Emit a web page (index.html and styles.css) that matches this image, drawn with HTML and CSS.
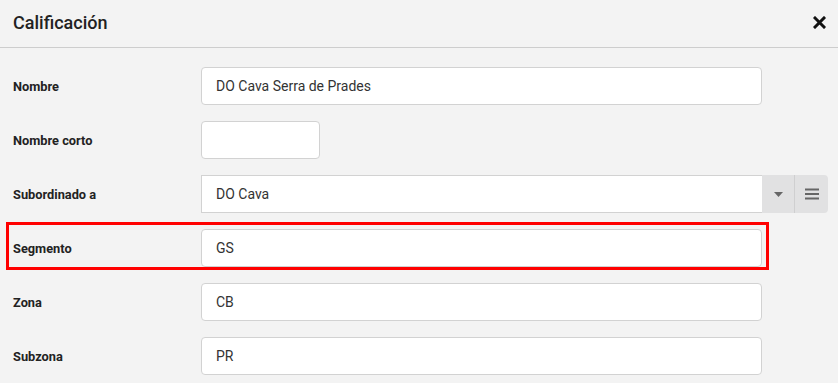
FILE: index.html
```html
<!DOCTYPE html>
<html lang="es">
<head>
    <meta charset="UTF-8">
    <meta name="viewport" content="width=device-width, initial-scale=1.0">
    <title>Calificación</title>
    <link rel="stylesheet" href="styles.css">
</head>
<body>
    <div class="header">
        <h1>Calificación</h1>
        <button class="close" aria-label="Cerrar">
            <svg width="13" height="13" viewBox="0 0 13 13">
                <path d="M2 2 L11 11 M11 2 L2 11" stroke="#111" stroke-width="3" stroke-linecap="square"/>
            </svg>
        </button>
    </div>
    <div class="form">
        <div class="row">
            <label>Nombre</label>
            <div class="field">DO Cava Serra de Prades</div>
        </div>
        <div class="row">
            <label>Nombre corto</label>
            <div class="field short"></div>
        </div>
        <div class="row">
            <label>Subordinado a</label>
            <div class="select">
                <div class="field">DO Cava</div>
                <div class="addon">
                    <svg width="9" height="5" viewBox="0 0 9 5"><path d="M0 0 H9 L4.5 5 Z" fill="#666"/></svg>
                </div>
                <div class="addon last">
                    <svg width="14" height="12" viewBox="0 0 14 12">
                        <path d="M0 1.5 H14 M0 6 H14 M0 10.5 H14" stroke="#666" stroke-width="2"/>
                    </svg>
                </div>
            </div>
        </div>
        <div class="row marked">
            <label>Segmento</label>
            <div class="field">GS</div>
        </div>
        <div class="row">
            <label>Zona</label>
            <div class="field">CB</div>
        </div>
        <div class="row">
            <label>Subzona</label>
            <div class="field">PR</div>
        </div>
    </div>
</body>
</html>
```

FILE: styles.css
```css
body {
    margin: 0;
    background-color: #f3f3f3;
    font-family: Roboto, "Liberation Sans", sans-serif;
    color: #222;
}
.header {
    height: 48px;
    border-bottom: 1px solid #cdcdcd;
    display: flex;
    align-items: center;
    justify-content: space-between;
    padding: 0 12px 2px 13px;
    box-sizing: border-box;
}
h1 {
    margin: 0;
    font-size: 18px;
    font-weight: 500;
}
.close {
    border: none;
    background: none;
    padding: 0;
    width: 13px;
    height: 13px;
    display: flex;
    cursor: pointer;
}
.form {
    padding: 19px 0 0 13px;
    display: flex;
    flex-direction: column;
    gap: 16px;
}
.row {
    display: flex;
    align-items: center;
    width: 815px;
}
.row label {
    width: 188px;
    flex-shrink: 0;
    font-size: 12.8px;
    font-weight: 700;
    color: #222;
}
.field {
    width: 561px;
    height: 38px;
    box-sizing: border-box;
    background: #fff;
    border: 1px solid #d2d2d2;
    border-radius: 4px;
    padding: 0 14px;
    display: flex;
    align-items: center;
    font-size: 14px;
    color: #333;
}
.field.short {
    width: 119px;
}
.select {
    display: flex;
    height: 38px;
}
.select .field {
    border-radius: 0;
    border-right: none;
}
.addon {
    width: 32px;
    background: #e1e1e2;
    display: flex;
    align-items: center;
    justify-content: center;
}
.addon.last {
    width: 33px;
    border-left: 1px solid #cfcfd0;
    border-radius: 0 4px 4px 0;
}
.row.marked {
    width: 749px;
    border: 3px solid #ff0000;
    padding: 4px 4px 0 4px;
    margin: -7px 0 -3px -7px;
}
```
